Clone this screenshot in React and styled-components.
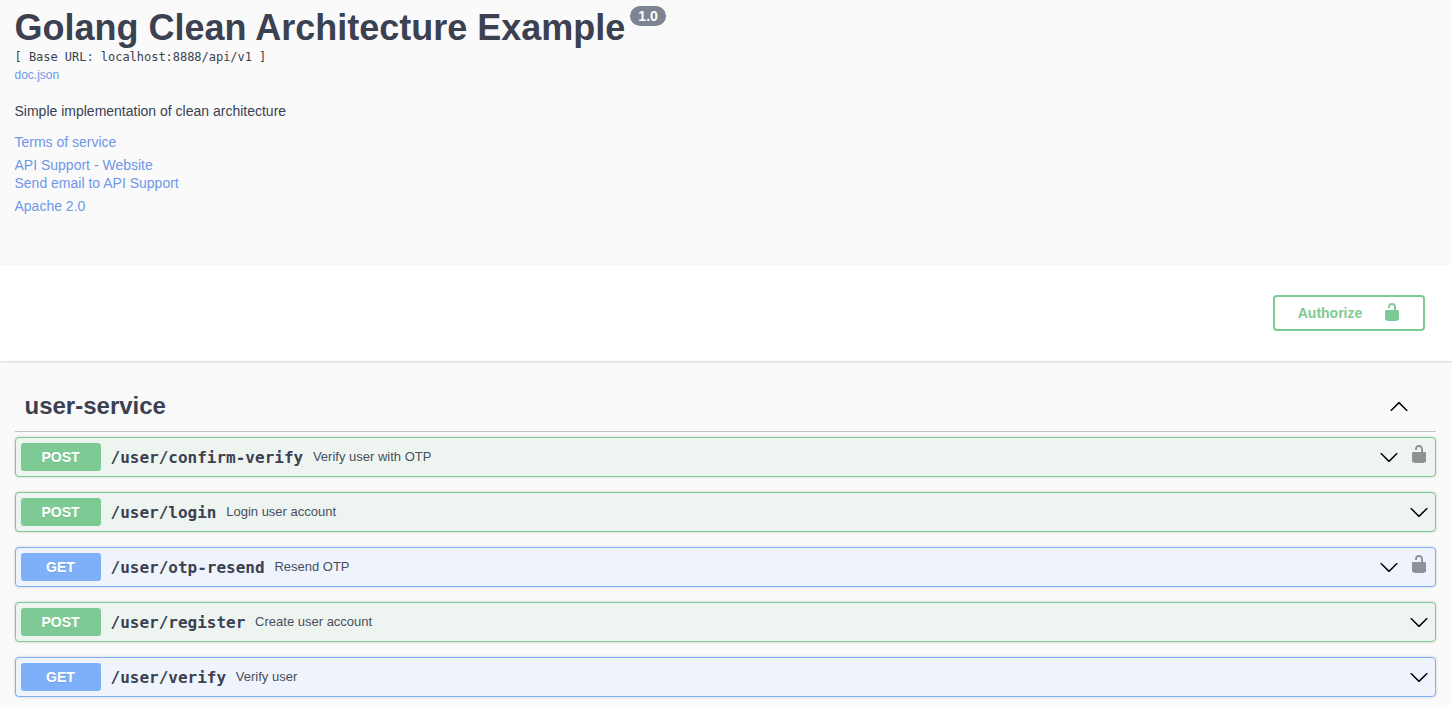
import React from "react";
import styled, { createGlobalStyle } from "styled-components";

const GlobalStyle = createGlobalStyle`
  html, body {
    margin: 0;
    height: 100%;
    overflow: hidden;
    background: #fafafa;
    font-family: "Liberation Sans", Arial, sans-serif;
    color: #3b4151;
  }
`;

const Info = styled.div`
  height: 265px;
  box-sizing: border-box;
  padding: 6px 15px 0 14.5px;
`;
const TitleRow = styled.div`
  display: flex;
  align-items: flex-start;
`;
const Title = styled.h2`
  margin: 0;
  font-size: 36px;
  line-height: 43px;
  font-weight: 700;
  color: #3b4151;
`;
const Version = styled.span`
  margin: 0 0 0 4.5px;
  padding: 0 8.5px;
  height: 20px;
  line-height: 20px;
  border-radius: 57px;
  background: #7d8492;
  color: #fff;
  font-size: 14px;
  font-weight: 700;
`;
const BaseUrl = styled.pre`
  margin: 1px 0 0;
  height: 14px;
  line-height: 14px;
  font-family: "DejaVu Sans Mono", monospace;
  font-size: 12px;
  font-weight: 400;
  letter-spacing: -0.03px;
  color: #3b4151;
`;
const InfoLink = styled.a`
  display: block;
  color: #6f97e8;
  font-size: ${props => props.size || 14}px;
  line-height: ${props => props.leading || 18}px;
  margin-top: ${props => props.top || 0}px;
`;
const Description = styled.p`
  margin: 15px 0 0;
  font-size: 14px;
  line-height: 21px;
`;

const SchemeBar = styled.div`
  display: flex;
  justify-content: flex-end;
  align-items: center;
  height: 96px;
  box-sizing: border-box;
  padding: 0 27px 0 0;
  background: #fff;
  box-shadow: 0 1px 2px rgba(0, 0, 0, 0.15);
`;
const AuthorizeButton = styled.button`
  display: flex;
  align-items: center;
  justify-content: center;
  gap: 20px;
  width: 152px;
  height: 36px;
  padding: 0 0 0 2px;
  background: transparent;
  border: 2px solid #7eca94;
  border-radius: 4px;
  color: #7eca94;
  font-family: "Liberation Sans", Arial, sans-serif;
  font-size: 14px;
  font-weight: 700;
  svg {
    fill: #7eca94;
    margin-top: -2px;
  }
`;

const Section = styled.div`
  padding: 20px 16px 0 15px;
`;
const TagHeader = styled.h3`
  display: flex;
  align-items: center;
  justify-content: space-between;
  margin: 0 0 5px;
  padding: 10px 27px 10px 9.5px;
  height: 30px;
  border-bottom: 1px solid rgba(59, 65, 81, 0.3);
  font-size: 24px;
  line-height: 30px;
  font-weight: 700;
  color: #3b4151;
`;
const Opblock = styled.div`
  display: flex;
  align-items: center;
  height: 40px;
  box-sizing: border-box;
  margin-bottom: 15px;
  padding: 0 6px 0 5px;
  border: 1px solid ${props => (props.method === "GET" ? "#7eb0fa" : "#7eca94")};
  border-radius: 4px;
  background: ${props => (props.method === "GET" ? "#eff4fc" : "#eef5f1")};
  box-shadow: 0 0 3px rgba(0, 0, 0, 0.19);
`;
const Method = styled.span`
  width: 80px;
  height: 28px;
  line-height: 28px;
  padding-right: 1px;
  box-sizing: border-box;
  text-align: center;
  border-radius: 3px;
  background: ${props => (props.method === "GET" ? "#7eb0fa" : "#7eca94")};
  color: #fff;
  font-size: 14px;
  font-weight: 700;
  text-shadow: 0 1px 0 rgba(0, 0, 0, 0.1);
`;
const Path = styled.span`
  padding: 0 9.75px 0 9.5px;
  font-family: "DejaVu Sans Mono", monospace;
  font-size: 16px;
  font-weight: 700;
  color: #3b4151;
`;
const Summary = styled.span`
  flex: 1;
  margin-top: -1px;
  font-size: 13px;
  color: #484e5d;
`;
const Arrow = styled.svg`
  width: 20px;
  height: 20px;
  fill: #000;
  flex: none;
`;
const LockIcon = styled.svg`
  width: 20px;
  height: 20px;
  flex: none;
  margin: -7px 0 0 10px;
  fill: #000;
  opacity: 0.4;
`;

const UNLOCK =
  "M15.8 8H14V5.6C14 2.703 12.665 1 10 1 7.334 1 6 2.703 6 5.6V6h2v-.801C8 3.754 8.797 3 10 3c1.203 0 2 .754 2 2.199V8H4c-.553 0-1 .646-1 1.199V17c0 .549.428 1.139.951 1.307l1.197.387C5.672 18.861 6.55 19 7.1 19h5.8c.549 0 1.428-.139 1.951-.307l1.196-.387c.524-.167.953-.757.953-1.306V9.199C17 8.646 16.352 8 15.8 8z";
const DOWN =
  "M17.418 6.109c.272-.268.709-.268.979 0s.271.701 0 .969l-7.908 7.83c-.27.268-.707.268-.979 0l-7.908-7.83c-.27-.268-.27-.701 0-.969.271-.268.709-.268.979 0L10 13.25l7.418-7.141z";
const UP =
  "M17.418 14.908c.272.268.709.268.979 0s.271-.701 0-.969l-7.908-7.83c-.27-.268-.707-.268-.979 0l-7.908 7.83c-.27.268-.27.701 0 .969.271.268.709.268.979 0L10 7.767l7.418 7.141z";

const endpoints = [
  { method: "POST", path: "/user/confirm-verify", summary: "Verify user with OTP", locked: true },
  { method: "POST", path: "/user/login", summary: "Login user account" },
  { method: "GET", path: "/user/otp-resend", summary: "Resend OTP", locked: true },
  { method: "POST", path: "/user/register", summary: "Create user account" },
  { method: "GET", path: "/user/verify", summary: "Verify user" },
];

export default function App() {
  return (
    <>
      <GlobalStyle />
      <Info>
        <TitleRow>
          <Title>Golang Clean Architecture Example</Title>
          <Version>1.0</Version>
        </TitleRow>
        <BaseUrl>[ Base URL: localhost:8888/api/v1 ]</BaseUrl>
        <InfoLink size={12} leading={22}>doc.json</InfoLink>
        <Description>Simple implementation of clean architecture</Description>
        <InfoLink top={11}>Terms of service</InfoLink>
        <InfoLink top={5}>API Support - Website</InfoLink>
        <InfoLink>Send email to API Support</InfoLink>
        <InfoLink top={5}>Apache 2.0</InfoLink>
      </Info>
      <SchemeBar>
        <AuthorizeButton>
          Authorize
          <svg width="20" height="20" viewBox="0 0 20 20">
            <path d={UNLOCK} />
          </svg>
        </AuthorizeButton>
      </SchemeBar>
      <Section>
        <TagHeader>
          user-service
          <Arrow viewBox="0 0 20 20">
            <path d={UP} />
          </Arrow>
        </TagHeader>
        {endpoints.map(item => (
          <Opblock key={item.path} method={item.method}>
            <Method method={item.method}>{item.method}</Method>
            <Path>{item.path}</Path>
            <Summary>{item.summary}</Summary>
            <Arrow viewBox="0 0 20 20">
              <path d={DOWN} />
            </Arrow>
            {item.locked && (
              <LockIcon viewBox="0 0 20 20">
                <path d={UNLOCK} />
              </LockIcon>
            )}
          </Opblock>
        ))}
      </Section>
    </>
  );
}
